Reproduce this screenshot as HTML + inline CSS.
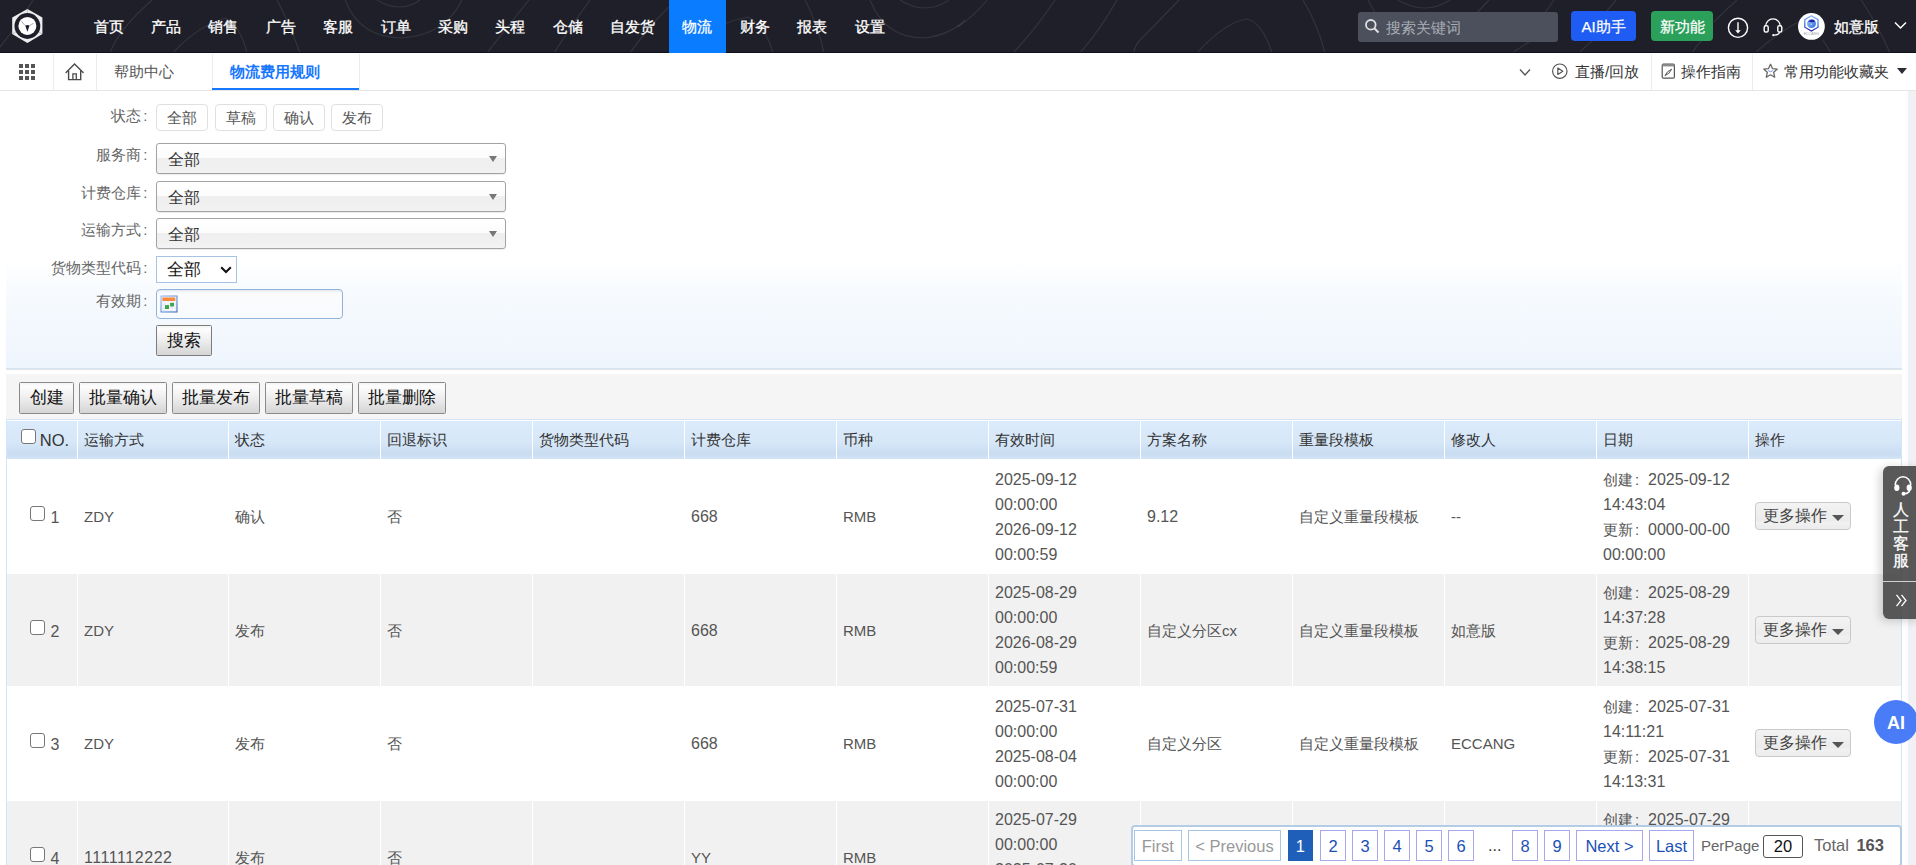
<!DOCTYPE html>
<html><head><meta charset="utf-8">
<style>
*{box-sizing:border-box;margin:0;padding:0}
html,body{width:1916px;height:865px;overflow:hidden;background:#fff;font-family:"Liberation Sans",sans-serif;font-size:15px;color:#555}
.abs{position:absolute}
#hdr{position:absolute;left:0;top:0;width:1916px;height:53px;background:linear-gradient(#1f1f29 52px,#10101a 52px);overflow:hidden}
#nav{position:absolute;left:80px;top:0;height:53px;display:flex}
#nav div{height:53px;line-height:54px;padding:0 13.7px;color:#fff;font-size:15px;-webkit-text-stroke:0.3px #fff;white-space:nowrap}
#nav div.on{background:#0a7cff}
#tabs{position:absolute;left:0;top:53px;width:1916px;height:38px;background:#fff;border-bottom:1px solid #e6e6e6}
.sep{position:absolute;top:1px;width:1px;height:36px;background:#ececec}
#filter{position:absolute;left:6px;top:91px;width:1896px;height:278px;background:linear-gradient(#fff 0%,#fff 60%,#f6fafe 75%,#eff5fd 100%);border-bottom:1px solid #d6e5f5}
#filter:after{content:"";position:absolute;left:0;right:0;bottom:-2px;height:1px;background:#e3e3e3}
.lbl{position:absolute;color:#666;font-size:15px;text-align:right;width:141.5px;left:0;margin-top:1px}
.sbtn{position:absolute;top:13px;width:52px;height:27px;border:1px solid #e0e0e0;border-radius:4px;background:#fff;color:#555;text-align:center;line-height:25px;font-size:15px}
.sel{position:absolute;left:150px;width:350px;height:31px;border:1px solid #a3a3a3;border-radius:3px;background:linear-gradient(#fff 0%,#fcfcfc 47%,#efefef 50%,#f0f0f0 80%,#f3f3f3 100%);box-shadow:0 1px 1px rgba(0,0,0,0.08);color:#333;font-size:16px;line-height:32px;padding-left:10.5px}
.sel i{position:absolute;right:8px;top:12px;width:0;height:0;border-left:4px solid transparent;border-right:4px solid transparent;border-top:6px solid #777}
#tool{position:absolute;left:6px;top:374px;width:1896px;height:45px;background:#f5f5f5}
.tb{position:absolute;top:8px;height:32px;border:1px solid #8a8a8a;border-radius:1.5px;background:linear-gradient(#f4f4f4,#fdfdfd 3px,#f0f0f0 45%,#dcdcdc 85%,#d5d5d5);color:#111;font-size:16.5px;line-height:28.5px;text-align:center}
#tbl{position:absolute;left:6px;top:419px;width:1896px;height:446px;border-left:1px solid #d3e5f9;border-right:1px solid #d3e5f9;border-top:1px solid #d3e5f9}
.row{position:absolute;left:0;width:1894px;display:flex}
.row>div{position:relative;flex:none;border-right:1px solid #fff;display:flex;align-items:center;padding-left:6px;color:#555;font-size:15px;line-height:25px}
.row>div:last-child{border-right:none}
.hd{top:0;height:39px;background:linear-gradient(#dcebfb 0%,#d6e7f8 55%,#c9dcf1 88%,#d3e5f8 100%);border-top:1px solid #fff}
.hd>div{color:#333;padding-bottom:2px}
.gr{background:#f1f1f1}
.cb{display:inline-block;position:relative;width:15px;height:15px;border:1.3px solid #777;border-radius:3px;background:#fff}
.more{position:absolute;left:6px;top:50%;margin-top:-14.5px;width:96px;height:28px;border:1px solid #c9c9c9;border-radius:4px;background:linear-gradient(#f3f3f3,#ebebeb 70%,#f1f1f1 72%,#ececec);color:#444;font-size:16px;line-height:26px;padding-left:7px}
.more i{position:absolute;left:75.5px;top:12px;border-left:6px solid transparent;border-right:6px solid transparent;border-top:6px solid #555}
#pg{position:absolute;left:1131px;top:825px;width:771px;height:42px;background:#fff;border:2px solid #b3cde6;border-radius:4px}
.pi{position:absolute;top:3px;height:31px;border:1px solid #a8c6e6;color:#1b4fb5;font-size:16.5px;line-height:31px;text-align:center}
.pn{border-color:#a9a7ee}
.pf{color:#999;border-color:#a8c6e6}
.on{background:#1f5fb9;border-color:#1f5fb9;color:#fff}
.d{font-size:16px}
.cn{font-size:15px}
.cn i{font-style:normal;display:inline-block;width:15px;padding-left:2px}
</style></head><body>

<div id="hdr">
  <svg class="abs" style="left:0;top:0" width="1916" height="52">
    <g fill="none" stroke="rgba(255,255,255,0.09)" stroke-width="1.2">
      <path d="M0 47 Q 18 25 33 0"/>
      <path d="M110 53 Q 118 30 152 0"/>
      <path d="M173 53 Q 195 28 225 18 Q 240 25 247 53"/>
      <path d="M277 0 Q 290 25 300 53"/>
      <path d="M345 0 Q 360 38 402 38 Q 445 35 462 0"/>
      <path d="M377 0 Q 400 14 420 0"/>
      <path d="M529 0 Q 505 30 487 53"/>
      <path d="M590 0 Q 570 28 554 53"/>
      <path d="M630 53 Q 650 25 668 8 L 680 0"/>
      <path d="M700 40 Q 720 22 748 17 Q 765 25 773 53"/>
      <path d="M805 0 Q 818 25 824 53"/>
      <path d="M870 0 Q 885 38 924 38 Q 950 35 965 20"/>
      <path d="M900 0 Q 925 16 949 0"/>
      <path d="M987 0 Q 975 15 958 27"/>
      <path d="M1055 0 Q 1035 30 1013 53"/>
      <path d="M1117 0 Q 1100 30 1080 53"/>
      <path d="M1179 0 Q 1150 30 1140 40 Q 1134 47 1134 53"/>
      <path d="M1197 53 Q 1225 22 1247 19 Q 1262 22 1272 53"/>
      <path d="M1303 0 Q 1318 25 1325 53"/>
      <path d="M1368 0 Q 1372 8 1376 14"/>
      <path d="M1398 0 Q 1425 16 1450 0"/>
      <path d="M1489 0 L 1470 20"/>
      <path d="M1554 0 L 1540 20"/>
      <path d="M1512 53 L 1532 40"/>
      <path d="M1579 53 Q 1590 42 1600 35"/>
      <path d="M1616 0 L 1606 12"/>
      <path d="M1737 0 Q 1725 10 1714 22"/>
      <path d="M1692 53 Q 1697 45 1702 40"/>
      <path d="M1755 53 Q 1775 35 1798 22"/>
      <path d="M1861 0 Q 1878 25 1890 53"/>
      <path d="M1823 40 L 1831 53"/>
    </g>
  </svg>
  <!-- logo -->
  <svg class="abs" style="left:0;top:0" width="60" height="52" viewBox="0 0 60 52">
    <polygon points="27.4,9 42.4,17.5 42.4,34 27.4,43 12.2,34 12.2,17.5" fill="#ededf0"/>
    <g stroke="#b8b8bd" stroke-width="0.8"><line x1="27.4" y1="9.5" x2="27.4" y2="13.5"/><line x1="12.6" y1="33.8" x2="16.3" y2="31.6"/><line x1="42" y1="33.8" x2="38.5" y2="31.6"/></g>
    <circle cx="27.4" cy="26" r="12.9" fill="#1f1f29"/>
    <circle cx="27.4" cy="25.9" r="9" fill="#fff"/>
    <path d="M25.2 25.4 Q27.4 24.6 29.6 25.4 L27.4 31.8 Z" fill="#1f1f29"/>
    <g stroke="#6a6a72" stroke-width="0.6" fill="none"><path d="M25 25.3 Q 23 23.5 21.5 21.3"/><path d="M29.8 25.3 Q 31.5 24.5 33.5 23.3"/></g>
  </svg>
  <div id="nav">
    <div>首页</div><div>产品</div><div>销售</div><div>广告</div><div>客服</div><div>订单</div><div>采购</div><div>头程</div><div>仓储</div><div>自发货</div><div class="on">物流</div><div>财务</div><div>报表</div><div>设置</div>
  </div>
  <!-- search -->
  <div class="abs" style="left:1358px;top:12px;width:200px;height:30px;background:#4b505c;border-radius:3px"></div>
  <svg class="abs" style="left:1364px;top:18px" width="17" height="17" viewBox="0 0 17 17"><circle cx="6.8" cy="6.8" r="4.8" fill="none" stroke="#e0e0e0" stroke-width="1.8"/><line x1="10.3" y1="10.3" x2="14.5" y2="14.5" stroke="#e0e0e0" stroke-width="2"/></svg>
  <div class="abs" style="left:1386px;top:13px;line-height:30px;color:#a9adb6;font-size:15px">搜索关键词</div>
  <div class="abs" style="left:1571px;top:11px;width:65px;height:30px;background:#1f5cf4;border-radius:4px;color:#fff;font-size:15px;line-height:31px;text-align:center;-webkit-text-stroke:0.25px #fff">AI助手</div>
  <div class="abs" style="left:1651px;top:11px;width:62px;height:30px;background:#2aa05a;border-radius:4px;color:#fff;font-size:15px;line-height:31px;text-align:center;-webkit-text-stroke:0.25px #fff">新功能</div>
  <svg class="abs" style="left:1726px;top:16px" width="24" height="24" viewBox="0 0 24 24"><circle cx="12" cy="11.8" r="9.6" fill="none" stroke="#fff" stroke-width="1.4"/><line x1="12" y1="6.2" x2="12" y2="15" stroke="#fff" stroke-width="1.4"/><path d="M9.2 14.3 L14.8 14.3 L12 17.6 Z" fill="#fff"/></svg>
  <svg class="abs" style="left:1762px;top:16px" width="22" height="22" viewBox="0 0 22 22"><path d="M3.6 10.5 A7.4 7.6 0 0 1 18.4 10.5" fill="none" stroke="#fff" stroke-width="1.4"/><rect x="2.2" y="9.6" width="4" height="6.4" rx="1.6" fill="none" stroke="#fff" stroke-width="1.4"/><rect x="15.8" y="9.6" width="4" height="6.4" rx="1.6" fill="none" stroke="#fff" stroke-width="1.4"/><path d="M17.6 16.2 Q 17 18.8 12 19.2" fill="none" stroke="#fff" stroke-width="1.3"/><circle cx="11.3" cy="19.2" r="1.1" fill="#fff"/></svg>
  <svg class="abs" style="left:1797px;top:12px" width="29" height="29" viewBox="0 0 29 29"><defs><linearGradient id="hx" x1="0" y1="0" x2="0" y2="1"><stop offset="0" stop-color="#8fb3f5"/><stop offset="0.55" stop-color="#3d78ea"/><stop offset="1" stop-color="#2a1fb4"/></linearGradient><linearGradient id="dk" x1="0" y1="0" x2="1" y2="1"><stop offset="0" stop-color="#a9c8f7"/><stop offset="1" stop-color="#1f6ae0"/></linearGradient></defs><circle cx="14.4" cy="14.4" r="13.4" fill="#fff"/><polygon points="14.4,3.8 21,7.6 21,15.2 14.4,19 7.8,15.2 7.8,7.6" fill="none" stroke="url(#hx)" stroke-width="1.3"/><circle cx="14.5" cy="11.6" r="4.5" fill="url(#dk)"/><path d="M10.8 9.6 Q14.5 6.2 18.3 9.2 Q17 10.6 14.6 10.2 Q12.3 9.9 10.8 9.6Z" fill="#2a1fb4"/><circle cx="14.3" cy="12.2" r="0.6" fill="#fff"/><text x="14.4" y="23" font-size="3.6" text-anchor="middle" fill="#9a9ea6" font-family="Liberation Sans">ECCANG</text></svg>
  <div class="abs" style="left:1834px;top:12px;line-height:30px;color:#fff;font-size:15px;-webkit-text-stroke:0.3px #fff">如意版</div>
  <svg class="abs" style="left:1894px;top:21px" width="13" height="9" viewBox="0 0 13 9"><path d="M1 1.5 L6.5 7 L12 1.5" fill="none" stroke="#fff" stroke-width="1.5"/></svg>
</div>

<div id="tabs">
  <svg class="abs" style="left:19px;top:11px" width="16" height="16" viewBox="0 0 16 16" fill="#555"><rect x="0" y="0" width="4" height="4"/><rect x="6" y="0" width="4" height="4"/><rect x="12" y="0" width="4" height="4"/><rect x="0" y="6" width="4" height="4"/><rect x="6" y="6" width="4" height="4"/><rect x="12" y="6" width="4" height="4"/><rect x="0" y="12" width="4" height="4"/><rect x="6" y="12" width="4" height="4"/><rect x="12" y="12" width="4" height="4"/></svg>
  <div class="sep" style="left:53px"></div>
  <svg class="abs" style="left:60px;top:5px" width="30" height="26" viewBox="0 0 30 26"><path d="M6.1 14.6 L14.55 6 L23.1 14.6" fill="none" stroke="#4a4a4a" stroke-width="1.4" stroke-linecap="round" stroke-linejoin="miter"/><path d="M8.6 12.8 V21.6 H20.7 V12.8" fill="none" stroke="#4a4a4a" stroke-width="1.4"/><path d="M12.9 21.6 V15.9 H16.3 V21.6" fill="none" stroke="#4a4a4a" stroke-width="1.3"/></svg>
  <div class="sep" style="left:96px"></div>
  <div class="abs" style="left:114px;top:0;line-height:38px;color:#555">帮助中心</div>
  <div class="sep" style="left:212px"></div>
  <div class="abs" style="left:230px;top:0;line-height:38px;color:#1677ff;font-weight:bold">物流费用规则</div>
  <div class="abs" style="left:212px;top:35px;width:147px;height:2px;background:#1677ff"></div>
  <div class="sep" style="left:359px"></div>
  <svg class="abs" style="left:1519px;top:15px" width="12" height="9" viewBox="0 0 12 9"><path d="M1 1.5 L6 7 L11 1.5" fill="none" stroke="#555" stroke-width="1.3"/></svg>
  <svg class="abs" style="left:1551px;top:10px" width="18" height="17" viewBox="0 0 18 17"><circle cx="8.8" cy="8.2" r="7.2" fill="none" stroke="#555" stroke-width="1.2"/><path d="M6.8 5 L11.8 8.2 L6.8 11.4 Z" fill="none" stroke="#555" stroke-width="1.2" stroke-linejoin="round"/></svg>
  <div class="abs" style="left:1575px;top:0;line-height:38px;color:#333">直播/回放</div>
  <div class="sep" style="left:1651px"></div>
  <svg class="abs" style="left:1661px;top:10px" width="15" height="17" viewBox="0 0 15 17"><rect x="1.2" y="1.2" width="12.2" height="14" rx="1.2" fill="none" stroke="#555" stroke-width="1.2"/><rect x="1.2" y="1.2" width="12.2" height="2.2" fill="#888"/><path d="M4 12.6 Q5.5 8.5 10.6 6.2 Q9.2 10.5 4 12.6 Z" fill="none" stroke="#555" stroke-width="1"/></svg>
  <div class="abs" style="left:1681px;top:0;line-height:38px;color:#333">操作指南</div>
  <div class="sep" style="left:1752px"></div>
  <svg class="abs" style="left:1762px;top:10px" width="17" height="16" viewBox="0 0 17 16"><path d="M8.5 1.3 L10.5 5.6 L15.3 6.1 L11.7 9.3 L12.7 14.2 L8.5 11.8 L4.3 14.2 L5.3 9.3 L1.7 6.1 L6.5 5.6 Z" fill="none" stroke="#666" stroke-width="1.3" stroke-linejoin="round"/><path d="M6.2 7.6 Q8.5 9.8 10.8 7.6" fill="none" stroke="#6b8cf0" stroke-width="1"/></svg>
  <div class="abs" style="left:1784px;top:0;line-height:38px;color:#333">常用功能收藏夹</div>
  <div class="abs" style="left:1897px;top:15px;border-left:5.5px solid transparent;border-right:5.5px solid transparent;border-top:6.5px solid #2a2d36"></div>
</div>
<div class="abs" style="left:1908px;top:91px;width:8px;height:774px;background:#f0f0f5"></div>

<!-- FILTER -->
<div id="filter">
  <div class="lbl" style="top:15px">状态<span style="padding-left:2.5px">:</span></div>
  <div class="sbtn" style="left:150px">全部</div>
  <div class="sbtn" style="left:209px">草稿</div>
  <div class="sbtn" style="left:267px">确认</div>
  <div class="sbtn" style="left:325px">发布</div>
  <div class="lbl" style="top:54px">服务商<span style="padding-left:2.5px">:</span></div>
  <div class="sel" style="top:52px">全部<i></i></div>
  <div class="lbl" style="top:92px">计费仓库<span style="padding-left:2.5px">:</span></div>
  <div class="sel" style="top:90px">全部<i></i></div>
  <div class="lbl" style="top:129px">运输方式<span style="padding-left:2.5px">:</span></div>
  <div class="sel" style="top:127px">全部<i></i></div>
  <div class="lbl" style="top:167px">货物类型代码<span style="padding-left:2.5px">:</span></div>
  <div class="abs" style="left:150px;top:165px;width:81px;height:27px;border:1px solid #a7c3e6;background:#fff;color:#111;font-size:16.5px;line-height:25px;padding-left:10px">全部
    <svg class="abs" style="left:63px;top:9px" width="12" height="8" viewBox="0 0 12 8"><path d="M1.2 1.2 L6 6 L10.8 1.2" fill="none" stroke="#111" stroke-width="2"/></svg>
  </div>
  <div class="lbl" style="top:200px">有效期<span style="padding-left:2.5px">:</span></div>
  <div class="abs" style="left:150px;top:198px;width:187px;height:30px;border:1px solid #92b4dc;border-radius:4px;background:linear-gradient(#eef1f5,#fafbfd 4px,#f8fbfe);box-shadow:inset 0 1px 1px rgba(0,0,0,0.04)">
    <svg class="abs" style="left:3px;top:5px" width="18" height="18" viewBox="0 0 18 18"><defs><linearGradient id="cg" x1="0" y1="0" x2="1" y2="1"><stop offset="0" stop-color="#9dbbe8"/><stop offset="1" stop-color="#2f5fb8"/></linearGradient></defs><rect x="0.5" y="0.5" width="17" height="17" fill="url(#cg)"/><rect x="1.5" y="1.5" width="15" height="15" fill="#e6edf8"/><g fill="#fff"><rect x="2" y="7.5" width="14" height="0.8"/><rect x="2" y="10.8" width="14" height="0.8"/><rect x="2" y="14" width="14" height="0.8"/><rect x="5.8" y="6" width="0.8" height="10"/><rect x="9.5" y="6" width="0.8" height="10"/><rect x="13" y="6" width="0.8" height="10"/></g><rect x="2.3" y="2.5" width="13" height="3.6" rx="1" fill="#fb8a3a"/><rect x="5" y="10.1" width="4" height="3.9" fill="#3fa34a"/><rect x="10.1" y="7.8" width="3.9" height="3.7" fill="#3fa34a"/></svg>
  </div>
  <div class="abs tb" style="left:150px;top:234px;width:56px;height:31px;border-color:#7c7c7c;line-height:29px">搜索</div>
</div>

<!-- TOOLBAR -->
<div id="tool">
  <div class="tb" style="left:13px;width:55px">创建</div>
  <div class="tb" style="left:73px;width:88px">批量确认</div>
  <div class="tb" style="left:166px;width:88px">批量发布</div>
  <div class="tb" style="left:259px;width:88px">批量草稿</div>
  <div class="tb" style="left:352px;width:88px">批量删除</div>
</div>

<!-- TABLE -->
<div id="tbl">
<div class="row hd"><div style="width:71px;justify-content:center;padding-left:6px"><span class="cb" style="top:-3px;margin-right:4px"></span><span style="font-size:16.5px;position:relative;top:1.5px">NO.</span></div><div style="width:151px">运输方式</div><div style="width:152px">状态</div><div style="width:152px">回退标识</div><div style="width:152px">货物类型代码</div><div style="width:152px">计费仓库</div><div style="width:152px">币种</div><div style="width:152px">有效时间</div><div style="width:152px">方案名称</div><div style="width:152px">重量段模板</div><div style="width:152px">修改人</div><div style="width:152px">日期</div><div style="width:152px">操作</div></div>
<div class="row " style="top:39px;height:115px"><div style="width:71px;justify-content:center;padding-left:5px"><span class="cb" style="top:-3px;margin-right:6px"></span><span style="position:relative;top:1px;font-size:16px">1</span></div><div style="width:151px">ZDY</div><div style="width:152px">确认</div><div style="width:152px">否</div><div style="width:152px"></div><div style="width:152px"><span class="d">668</span></div><div style="width:152px">RMB</div><div style="width:152px"><span class="d">2025-09-12<br>00:00:00<br>2026-09-12<br>00:00:59</span></div><div style="width:152px"><span class="d">9.12</span></div><div style="width:152px">自定义重量段模板</div><div style="width:152px">--</div><div style="width:152px"><span class="d"><span class="cn">创建<i>:</i></span>2025-09-12<br>14:43:04<br><span class="cn">更新<i>:</i></span>0000-00-00<br>00:00:00</span></div><div style="width:152px"><span class="more">更多操作<i></i></span></div></div>
<div class="row gr" style="top:154px;height:112px"><div style="width:71px;justify-content:center;padding-left:5px"><span class="cb" style="top:-3px;margin-right:6px"></span><span style="position:relative;top:1px;font-size:16px">2</span></div><div style="width:151px">ZDY</div><div style="width:152px">发布</div><div style="width:152px">否</div><div style="width:152px"></div><div style="width:152px"><span class="d">668</span></div><div style="width:152px">RMB</div><div style="width:152px"><span class="d">2025-08-29<br>00:00:00<br>2026-08-29<br>00:00:59</span></div><div style="width:152px">自定义分区cx</div><div style="width:152px">自定义重量段模板</div><div style="width:152px">如意版</div><div style="width:152px"><span class="d"><span class="cn">创建<i>:</i></span>2025-08-29<br>14:37:28<br><span class="cn">更新<i>:</i></span>2025-08-29<br>14:38:15</span></div><div style="width:152px"><span class="more">更多操作<i></i></span></div></div>
<div class="row " style="top:266px;height:115px"><div style="width:71px;justify-content:center;padding-left:5px"><span class="cb" style="top:-3px;margin-right:6px"></span><span style="position:relative;top:1px;font-size:16px">3</span></div><div style="width:151px">ZDY</div><div style="width:152px">发布</div><div style="width:152px">否</div><div style="width:152px"></div><div style="width:152px"><span class="d">668</span></div><div style="width:152px">RMB</div><div style="width:152px"><span class="d">2025-07-31<br>00:00:00<br>2025-08-04<br>00:00:00</span></div><div style="width:152px">自定义分区</div><div style="width:152px">自定义重量段模板</div><div style="width:152px">ECCANG</div><div style="width:152px"><span class="d"><span class="cn">创建<i>:</i></span>2025-07-31<br>14:11:21<br><span class="cn">更新<i>:</i></span>2025-07-31<br>14:13:31</span></div><div style="width:152px"><span class="more">更多操作<i></i></span></div></div>
<div class="row gr" style="top:381px;height:112px"><div style="width:71px;justify-content:center;padding-left:5px"><span class="cb" style="top:-3px;margin-right:6px"></span><span style="position:relative;top:1px;font-size:16px">4</span></div><div style="width:151px"><span class="d" style="letter-spacing:0.55px">1111112222</span></div><div style="width:152px">发布</div><div style="width:152px">否</div><div style="width:152px"></div><div style="width:152px">YY</div><div style="width:152px">RMB</div><div style="width:152px"><span class="d">2025-07-29<br>00:00:00<br>2025-07-30<br>00:00:00</span></div><div style="width:152px">自定义分区</div><div style="width:152px">自定义重量段模板</div><div style="width:152px">如意版</div><div style="width:152px"><span class="d"><span class="cn">创建<i>:</i></span>2025-07-29<br>14:00:10<br><span class="cn">更新<i>:</i></span>2025-07-29<br>14:01:00</span></div><div style="width:152px"><span class="more">更多操作<i></i></span></div></div>
</div>

<!-- pagination -->
<div id="pg">
<div class="pi pf" style="left:1px;width:47.5px">First</div><div class="pi pf" style="left:55px;width:93px">&lt; Previous</div><div class="pi on" style="left:155px;width:24.5px">1</div><div class="pi pn" style="left:187px;width:26px">2</div><div class="pi pn" style="left:219px;width:26px">3</div><div class="pi pn" style="left:251px;width:26px">4</div><div class="pi pn" style="left:283px;width:26px">5</div><div class="pi pn" style="left:315px;width:26px">6</div><div class="pi pn" style="left:379px;width:26px">8</div><div class="pi pn" style="left:411px;width:26px">9</div><div class="pi pn" style="left:443px;width:67px">Next &gt;</div><div class="pi pn" style="left:516px;width:45px">Last</div><div class="abs" style="left:355px;top:3px;line-height:31px;color:#333;font-size:16px">...</div><div class="abs" style="left:568px;top:3px;line-height:31px;color:#666;font-size:15px">PerPage</div><div class="abs" style="left:630px;top:8px;width:40px;height:23px;border:1px solid #555;border-radius:3px;color:#111;font-size:16.5px;line-height:21px;text-align:center">20</div><div class="abs" style="left:681px;top:3px;line-height:31px;color:#666;font-size:16.5px">Total <b style="color:#555;margin-left:3px">163</b></div>
</div>

<!-- floating widgets -->
<div class="abs" style="left:1883px;top:466px;width:40px;height:152.5px;background:rgba(60,60,60,0.85);border-radius:6px;box-shadow:-3px 2px 10px rgba(0,0,0,0.18)">
  <svg class="abs" style="left:9px;top:8px" width="22" height="22" viewBox="0 0 22 22"><path d="M3.2 11 A7.8 8.2 0 0 1 18.8 11" fill="none" stroke="#fff" stroke-width="1.5"/><ellipse cx="4.8" cy="13.7" rx="2.6" ry="3.3" fill="#fff"/><ellipse cx="17.2" cy="13.7" rx="2.6" ry="3.3" fill="#fff"/><path d="M17.6 16.5 Q 17 19.2 12.5 19.8" fill="none" stroke="#fff" stroke-width="1.5"/><circle cx="11.5" cy="19.8" r="2" fill="#fff"/></svg>
  <div class="abs" style="left:9px;top:35px;width:17px;color:#fff;font-size:16px;line-height:17px;text-align:center;-webkit-text-stroke:0.25px #fff">人<br>工<br>客<br>服</div>
  <div class="abs" style="left:0;top:115px;width:40px;height:1px;background:#d0d0d0"></div>
  <svg class="abs" style="left:12px;top:128px" width="13" height="13" viewBox="0 0 13 13"><path d="M1.5 0.8 L6 6.5 L1.5 12.2 M6.5 0.8 L11 6.5 L6.5 12.2" fill="none" stroke="#fff" stroke-width="1.3"/></svg>
</div>
<div class="abs" style="left:1874px;top:700px;width:44px;height:44px;border-radius:50%;background:#4a7cf7;color:#fff;font-weight:bold;font-size:18px;line-height:46px;text-align:center;padding-right:0">AI</div>

</body></html>
